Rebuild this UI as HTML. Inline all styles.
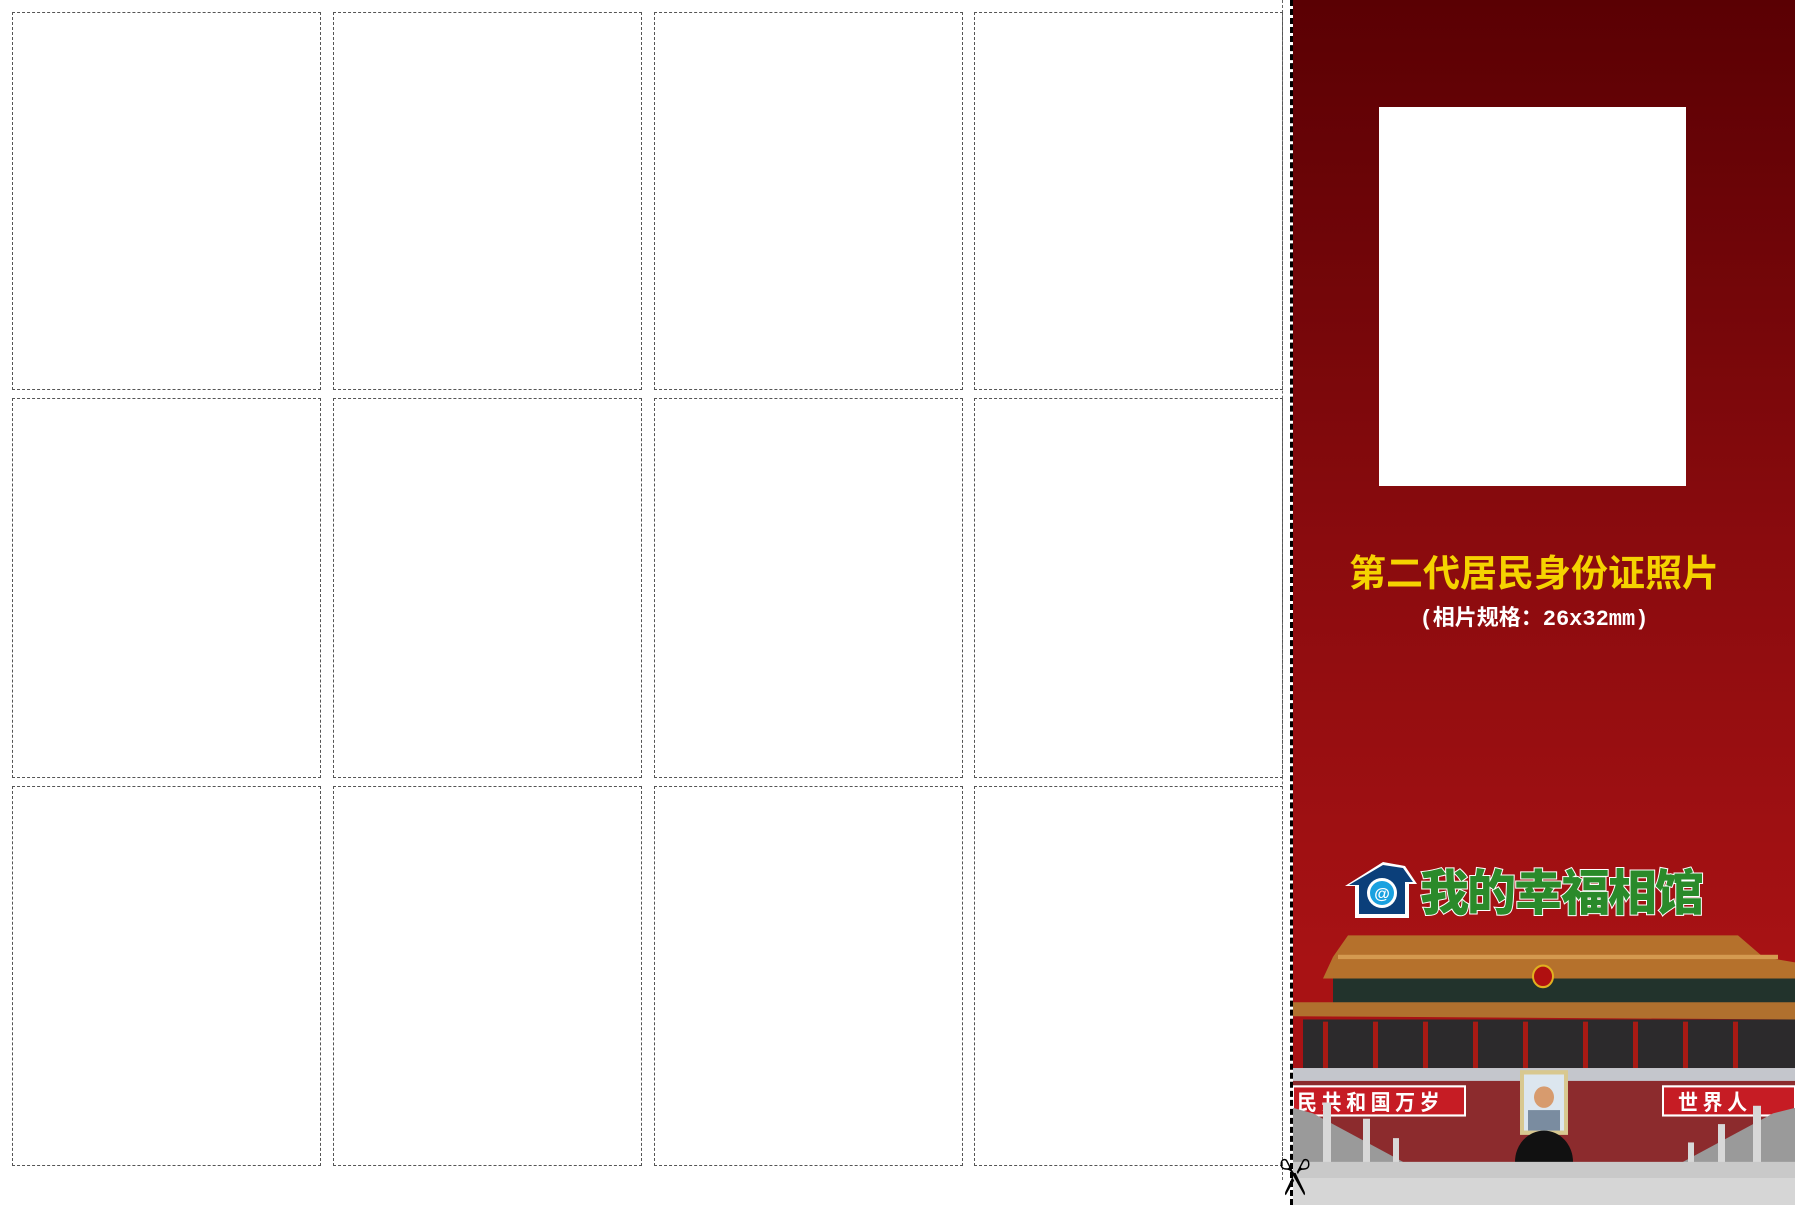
<!DOCTYPE html>
<html><head><meta charset="utf-8"><style>
html,body{margin:0;padding:0;background:#fff;}
body{width:1795px;height:1205px;position:relative;overflow:hidden;font-family:"Liberation Sans","Noto Sans CJK SC",sans-serif;}
.c{position:absolute;border:1px dashed #555;box-sizing:border-box;}
#panel{position:absolute;left:1293px;top:0;width:502px;height:1205px;background:linear-gradient(#5a0003,#8a0b0e 45%,#a81214 80%);}
#cut{position:absolute;left:1290px;top:0;width:0;height:1205px;border-left:3px dashed #000;}
#thin{position:absolute;left:1282px;top:0;height:1180px;border-left:1px dashed #666;}
</style></head><body>
<div id="thin"></div>
<div class="c" style="left:12px;top:12px;width:309px;height:378px"></div>
<div class="c" style="left:333px;top:12px;width:309px;height:378px"></div>
<div class="c" style="left:654px;top:12px;width:309px;height:378px"></div>
<div class="c" style="left:974px;top:12px;width:309px;height:378px"></div>
<div class="c" style="left:12px;top:398px;width:309px;height:380px"></div>
<div class="c" style="left:333px;top:398px;width:309px;height:380px"></div>
<div class="c" style="left:654px;top:398px;width:309px;height:380px"></div>
<div class="c" style="left:974px;top:398px;width:309px;height:380px"></div>
<div class="c" style="left:12px;top:786px;width:309px;height:380px"></div>
<div class="c" style="left:333px;top:786px;width:309px;height:380px"></div>
<div class="c" style="left:654px;top:786px;width:309px;height:380px"></div>
<div class="c" style="left:974px;top:786px;width:309px;height:380px"></div>

<div id="panel">
 <div style="position:absolute;left:86px;top:107px;width:307px;height:379px;background:#fff"></div>
 <div style="position:absolute;left:0;width:482px;top:543px;text-align:center;color:#f5d300;font-size:37px;font-weight:bold;font-family:'Noto Sans CJK SC',sans-serif;letter-spacing:0px">第二代居民身份证照片</div>
 <div style="position:absolute;left:0;width:482px;top:600px;text-align:center;color:#fff;font-size:22px;font-weight:bold;font-family:'Liberation Mono','Noto Sans CJK SC',monospace">(相片规格：26x32mm)</div>
 <svg style="position:absolute;left:50px;top:858px" width="76" height="64" viewBox="0 0 76 64">
  <path d="M2 28 L40 4 L62 8 L74 26 L66 26 L66 60 L12 60 L12 28 Z" fill="#fff"/>
  <path d="M6 27 L40 7 L60 10 L70 24 L62 24 L62 56 L16 56 L16 27 Z" fill="#0b3f7a"/>
  <circle cx="39" cy="35" r="15" fill="#fff"/><circle cx="39" cy="35" r="12" fill="#1aa1e0"/>
  <text x="39" y="41" text-anchor="middle" font-size="16" fill="#fff" font-weight="bold" font-family="Liberation Sans">@</text>
 </svg>
 <div style="position:absolute;left:127px;top:860px;font-size:49px;font-weight:900;color:#2a8a2a;font-family:'Noto Sans CJK SC',sans-serif;-webkit-text-stroke:2px #fff;paint-order:stroke fill;letter-spacing:-2px;line-height:60px">我的幸福相馆</div>
 <svg style="position:absolute;left:0;top:903px" width="502" height="302" viewBox="0 0 502 280" preserveAspectRatio="none">
  <polygon points="55,30 445,30 470,50 502,55 502,70 30,70 40,50" fill="#b5712c"/>
  <rect x="45" y="48" width="440" height="4" fill="#d49a50"/>
  <rect x="40" y="70" width="462" height="25" fill="#22332c"/>
  <circle cx="250" cy="68" r="10" fill="#b01010" stroke="#e0b020" stroke-width="2"/>
  <polygon points="0,92 502,92 502,108 0,105" fill="#b0702e"/>
  <rect x="10" y="108" width="492" height="45" fill="#2c2a2c"/>
  <g fill="#a81a14"><rect x="30" y="110" width="5" height="43"/><rect x="80" y="110" width="5" height="43"/><rect x="130" y="110" width="5" height="43"/><rect x="180" y="110" width="5" height="43"/><rect x="230" y="110" width="5" height="43"/><rect x="290" y="110" width="5" height="43"/><rect x="340" y="110" width="5" height="43"/><rect x="390" y="110" width="5" height="43"/><rect x="440" y="110" width="5" height="43"/></g>
  <rect x="0" y="153" width="502" height="12" fill="#c4c6cc"/>
  <rect x="0" y="165" width="502" height="95" fill="#8c2b2d"/>
  <rect x="0" y="170" width="172" height="27" fill="#c61c24" stroke="#fff" stroke-width="2"/>
  <text x="4" y="192" font-size="20" fill="#fff" font-weight="bold" font-family="Noto Sans CJK SC">民 共 和 国 万 岁</text>
  <rect x="370" y="170" width="132" height="27" fill="#c61c24" stroke="#fff" stroke-width="2"/>
  <text x="385" y="192" font-size="20" fill="#fff" font-weight="bold" font-family="Noto Sans CJK SC">世 界 人</text>
  <rect x="227" y="155" width="48" height="60" fill="#d8c890"/>
  <rect x="231" y="159" width="40" height="52" fill="#dce6ef"/>
  <circle cx="251" cy="180" r="10" fill="#d79b6e"/>
  <rect x="235" y="192" width="32" height="19" fill="#7a8ca0"/>
  <path d="M222 240 A29 29 0 0 1 280 240 L280 260 L222 260 Z" fill="#111"/>
  <path d="M0 190 L20 195 L120 245 L135 255 L0 255 Z" fill="#9a9a9a"/>
  <path d="M502 190 L480 195 L380 245 L365 255 L502 255 Z" fill="#9a9a9a"/>
  <g fill="#d8d8d8"><rect x="30" y="185" width="8" height="70"/><rect x="70" y="200" width="7" height="55"/><rect x="100" y="218" width="6" height="37"/><rect x="460" y="188" width="8" height="67"/><rect x="425" y="205" width="7" height="50"/><rect x="395" y="222" width="6" height="33"/></g>
  <rect x="0" y="240" width="502" height="40" fill="#c9c9c9"/>
  <rect x="0" y="255" width="502" height="25" fill="#d6d6d6"/>
 </svg>
</div>
<div id="cut"></div>
<div style="position:absolute;left:1273px;top:1157px;font-size:40px;color:#000;line-height:40px;transform:rotate(90deg)">✂</div>
</body></html>
